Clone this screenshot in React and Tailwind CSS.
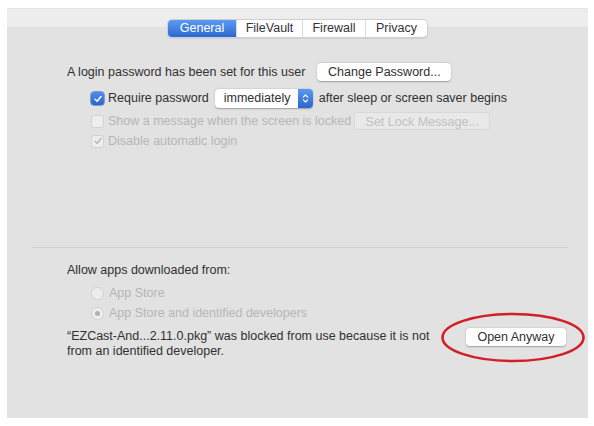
function Check({ checked, disabled }) {
  if (checked && !disabled) {
    return (
      <span className="flex h-[13px] w-[13px] shrink-0 items-center justify-center rounded-[3px] bg-gradient-to-b from-[#4f8ef0] to-[#2a65cf] shadow-[0_0_0_0.5px_#1f56b8]">
        <svg viewBox="0 0 12 12" className="h-[10px] w-[10px]">
          <path d="M2.5 6.3 L5 8.8 L9.6 3" fill="none" stroke="#fff" strokeWidth="1.8" strokeLinecap="round" strokeLinejoin="round" />
        </svg>
      </span>
    );
  }
  return (
    <span className="flex h-[13px] w-[13px] shrink-0 items-center justify-center rounded-[3px] border border-[#d2d2d2] bg-[#ededed]">
      {checked && (
        <svg viewBox="0 0 12 12" className="h-[10px] w-[10px]">
          <path d="M2.5 6.3 L5 8.8 L9.6 3" fill="none" stroke="#b4b4b4" strokeWidth="1.6" strokeLinecap="round" strokeLinejoin="round" />
        </svg>
      )}
    </span>
  );
}

function Radio({ checked }) {
  return (
    <span className="flex h-[13px] w-[13px] shrink-0 items-center justify-center rounded-full border border-[#d0d0d0] bg-[#ededed]">
      {checked && <span className="h-[5px] w-[5px] rounded-full bg-[#b0b0b0]" />}
    </span>
  );
}

const tabs = ["General", "FileVault", "Firewall", "Privacy"];
const tabWidths = ["w-[68px]", "w-[66px]", "w-[63px]", "w-[62px]"];

export default function App() {
  return (
    <div
      className="h-[426px] w-[594px] bg-white pl-[7px] pt-[8px] text-[12.5px] text-[#303030]"
      style={{ fontFamily: '"Liberation Sans", Arial, sans-serif' }}
    >
      <div className="flex h-[410px] w-[581px] flex-col bg-[#e2e2e2]">
        <div className="h-[19px] border-t border-[#e4e4e4] bg-[#ededed]" />

        <div className="-mt-[8px] flex justify-center">
          <div className="flex h-[19px] overflow-hidden rounded-[5px] border border-[#cfcfcf] bg-white shadow-[0_1px_1px_rgba(0,0,0,0.08)]">
            {tabs.map((t, i) => (
              <div
                key={t}
                className={
                  i === 0
                    ? `${tabWidths[i]} flex items-center justify-center bg-gradient-to-b from-[#5c9bf2] to-[#2c68d1] text-white`
                    : `${tabWidths[i]} flex items-center justify-center border-l border-[#dadada] text-[#333]`
                }
              >
                {t}
              </div>
            ))}
          </div>
        </div>

        <div className="mt-[25px] pl-[60px]">
          <div className="flex h-[18px] items-center">
            <span>A login password has been set for this user</span>
            <button className="ml-[12px] h-[18px] w-[134px] rounded-[4px] bg-white text-[#303030] shadow-[0_0.5px_1.5px_rgba(0,0,0,0.3)]">
              Change Password...
            </button>
          </div>

          <div className="mt-[8px] flex h-[19px] items-center pl-[24px]">
            <Check checked />
            <span className="ml-[4px]">Require password</span>
            <div className="ml-[6px] flex h-[19px] w-[98px] items-center overflow-hidden rounded-[4px] bg-white shadow-[0_0.5px_1.5px_rgba(0,0,0,0.3)]">
              <span className="flex-1 pl-[9px]">immediately</span>
              <span className="flex h-full w-[15px] items-center justify-center bg-gradient-to-b from-[#5a98f0] to-[#2b66cf]">
                <svg viewBox="0 0 8 12" className="h-[11px] w-[7px]">
                  <path d="M1.5 4.5 L4 2 L6.5 4.5 M1.5 7.5 L4 10 L6.5 7.5" fill="none" stroke="#fff" strokeWidth="1.3" strokeLinecap="round" strokeLinejoin="round" />
                </svg>
              </span>
            </div>
            <span className="ml-[6px]">after sleep or screen saver begins</span>
          </div>

          <div className="mt-[4px] flex h-[18px] items-center pl-[24px] text-[#b6b6b6]">
            <Check />
            <span className="ml-[4px]">Show a message when the screen is locked</span>
            <button className="ml-[3px] h-[18px] w-[136px] rounded-[4px] border border-[#d8d8d8] bg-[#e9e9e9] text-[#c0c0c0]">
              Set Lock Message...
            </button>
          </div>

          <div className="mt-[3px] flex h-[16px] items-center pl-[24px] text-[#b6b6b6]">
            <Check checked disabled />
            <span className="ml-[4px]">Disable automatic login</span>
          </div>
        </div>

        <div className="ml-[25px] mt-[98px] h-px w-[536px] bg-[#d0d0d0]" />

        <div className="mt-[14px] pl-[60px]">
          <div className="flex h-[16px] items-center">Allow apps downloaded from:</div>

          <div className="mt-[7px] flex h-[16px] items-center pl-[24px] text-[#b6b6b6]">
            <Radio />
            <span className="ml-[5px]">App Store</span>
          </div>
          <div className="mt-[4px] flex h-[16px] items-center pl-[24px] text-[#b6b6b6]">
            <Radio checked />
            <span className="ml-[5px]">App Store and identified developers</span>
          </div>

          <div className="mt-[8px] flex items-start pr-[22px]">
            <div className="flex-1 leading-[15px]">
              <div className="whitespace-nowrap">“EZCast-And...2.11.0.pkg” was blocked from use because it is not</div>
              <div className="whitespace-nowrap">from an identified developer.</div>
            </div>
            <div className="relative -mt-[1px]">
              <button className="h-[18px] w-[100px] rounded-[4px] bg-white text-[#303030] shadow-[0_0.5px_1.5px_rgba(0,0,0,0.3)]">
                Open Anyway
              </button>
              <svg className="pointer-events-none absolute -left-[26px] -top-[16px] h-[51px] w-[146px]" viewBox="0 0 146 51">
                <ellipse cx="73" cy="25.5" rx="70.5" ry="23.5" fill="none" stroke="#d21f26" strokeWidth="2.6" />
              </svg>
            </div>
          </div>
        </div>
      </div>
    </div>
  );
}
